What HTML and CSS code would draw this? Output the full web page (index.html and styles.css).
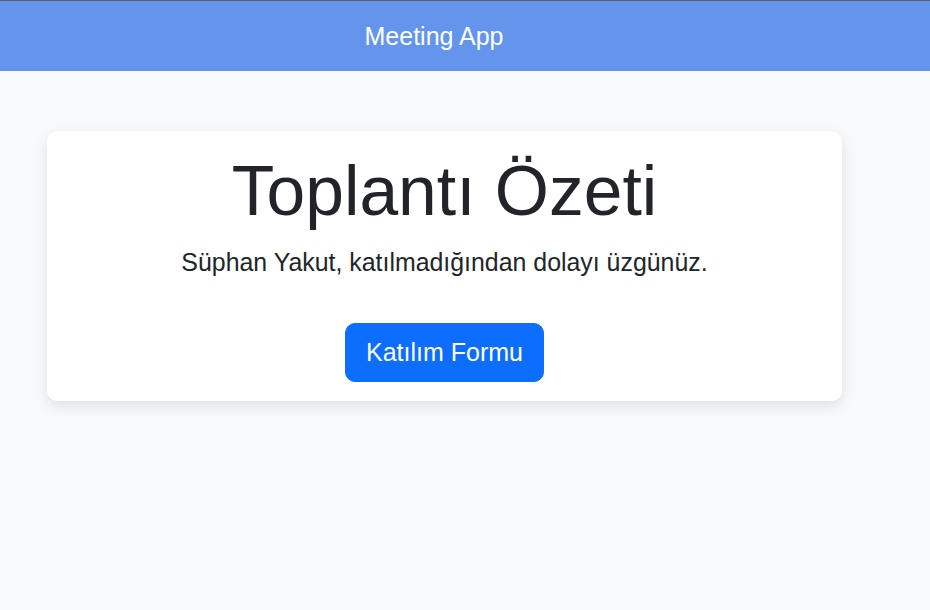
FILE: index.html
```html
<!DOCTYPE html>
<html lang="tr">
<head>
<meta charset="utf-8">
<title>Meeting App</title>
<link rel="stylesheet" href="styles.css">
</head>
<body>
<header class="topbar">
  <span class="brand">Meeting App</span>
</header>
<main class="page">
  <section class="card">
    <h1 class="title">Toplantı Özeti</h1>
    <p class="lead">Süphan Yakut, katılmadığından dolayı üzgünüz.</p>
    <button class="btn" type="button">Katılım Formu</button>
  </section>
</main>
</body>
</html>
```

FILE: styles.css
```css
* { box-sizing: border-box; }
html, body { margin: 0; padding: 0; }
body {
  background: #f8f9fa;
  font-family: "Liberation Sans", Arial, sans-serif;
  color: #212529;
  height: 610px;
}
.topbar {
  height: 71px;
  border-top: 1px solid #5a5f66;
  background: #6495ed;
  display: flex;
  align-items: center;
  justify-content: center;
  padding-right: 62px;
}
.brand {
  color: #fff;
  font-size: 25px;
  line-height: 1.2;
}
.page {
  padding: 60px 0 0 47px;
}
.card {
  width: 795px;
  background: #fff;
  border-radius: 10px;
  box-shadow: 0 5px 14px rgba(0, 0, 0, 0.1);
  padding: 19px 20px 19px;
  display: flex;
  flex-direction: column;
  align-items: center;
  text-align: center;
}
.title {
  margin: 0 0 10px;
  font-size: 69.6px;
  font-weight: 400;
  line-height: 1.2;
}
.lead {
  margin: 0 0 42px;
  font-size: 24.9px;
  line-height: 1.5;
}
.btn {
  font-family: inherit;
  font-size: 25px;
  line-height: 37px;
  color: #fff;
  background: #0d6efd;
  border: 1px solid #0d6efd;
  border-radius: 10px;
  padding: 10px 20px;
  cursor: pointer;
}
```
